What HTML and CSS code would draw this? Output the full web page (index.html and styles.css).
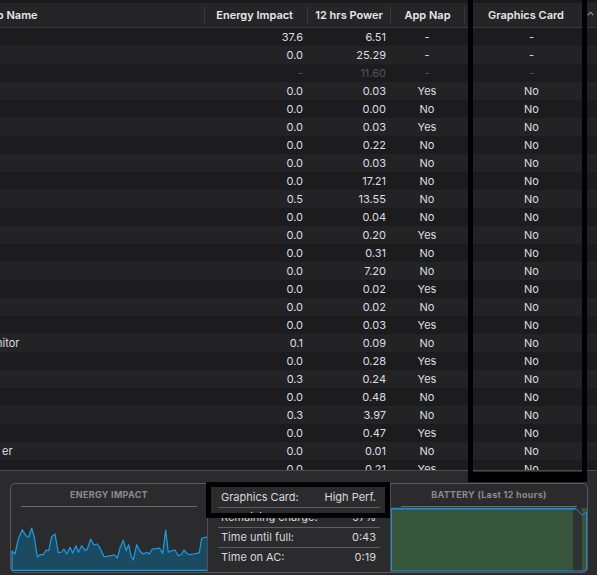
FILE: index.html
```html
<!DOCTYPE html>
<html>
<head>
<meta charset="utf-8">
<link rel="stylesheet" href="styles.css">
</head>
<body>
<div class="window">
  <div class="topstrip"></div>
  <div class="table">
    <div class="thead grid">
      <div class="hc name"><span class="clip-name">App Name</span></div>
      <div class="hc sep num-energy-h">Energy Impact</div>
      <div class="hc sep num-power-h">12 hrs Power</div>
      <div class="hc sep center">App Nap</div>
      <div class="hc sep gpu-h"><span class="gpu-label">Graphics Card</span><svg class="sort" width="7" height="5" viewBox="0 0 7 5"><path d="M0.8 4.2 L3.5 1.2 L6.2 4.2" fill="none" stroke="#9a9a9c" stroke-width="1.1"/></svg></div>
    </div>
    <div class="tbody">
      <div class="row grid"><div></div><div class="e">37.6</div><div class="p">6.51</div><div class="c">-</div><div class="g">-</div></div>
      <div class="row grid"><div></div><div class="e">0.0</div><div class="p">25.29</div><div class="c">-</div><div class="g">-</div></div>
      <div class="row grid dim"><div></div><div class="e">-</div><div class="p">11.60</div><div class="c">-</div><div class="g">-</div></div>
      <div class="row grid"><div></div><div class="e">0.0</div><div class="p">0.03</div><div class="c">Yes</div><div class="g">No</div></div>
      <div class="row grid"><div></div><div class="e">0.0</div><div class="p">0.00</div><div class="c">No</div><div class="g">No</div></div>
      <div class="row grid"><div></div><div class="e">0.0</div><div class="p">0.03</div><div class="c">Yes</div><div class="g">No</div></div>
      <div class="row grid"><div></div><div class="e">0.0</div><div class="p">0.22</div><div class="c">No</div><div class="g">No</div></div>
      <div class="row grid"><div></div><div class="e">0.0</div><div class="p">0.03</div><div class="c">No</div><div class="g">No</div></div>
      <div class="row grid"><div></div><div class="e">0.0</div><div class="p">17.21</div><div class="c">No</div><div class="g">No</div></div>
      <div class="row grid"><div></div><div class="e">0.5</div><div class="p">13.55</div><div class="c">No</div><div class="g">No</div></div>
      <div class="row grid"><div></div><div class="e">0.0</div><div class="p">0.04</div><div class="c">No</div><div class="g">No</div></div>
      <div class="row grid"><div></div><div class="e">0.0</div><div class="p">0.20</div><div class="c">Yes</div><div class="g">No</div></div>
      <div class="row grid"><div></div><div class="e">0.0</div><div class="p">0.31</div><div class="c">No</div><div class="g">No</div></div>
      <div class="row grid"><div></div><div class="e">0.0</div><div class="p">7.20</div><div class="c">No</div><div class="g">No</div></div>
      <div class="row grid"><div></div><div class="e">0.0</div><div class="p">0.02</div><div class="c">Yes</div><div class="g">No</div></div>
      <div class="row grid"><div></div><div class="e">0.0</div><div class="p">0.02</div><div class="c">No</div><div class="g">No</div></div>
      <div class="row grid"><div></div><div class="e">0.0</div><div class="p">0.03</div><div class="c">Yes</div><div class="g">No</div></div>
      <div class="row grid"><div class="n n-monitor">nitor</div><div class="e">0.1</div><div class="p">0.09</div><div class="c">No</div><div class="g">No</div></div>
      <div class="row grid"><div></div><div class="e">0.0</div><div class="p">0.28</div><div class="c">Yes</div><div class="g">No</div></div>
      <div class="row grid"><div></div><div class="e">0.3</div><div class="p">0.24</div><div class="c">Yes</div><div class="g">No</div></div>
      <div class="row grid"><div></div><div class="e">0.0</div><div class="p">0.48</div><div class="c">No</div><div class="g">No</div></div>
      <div class="row grid"><div></div><div class="e">0.3</div><div class="p">3.97</div><div class="c">No</div><div class="g">No</div></div>
      <div class="row grid"><div></div><div class="e">0.0</div><div class="p">0.47</div><div class="c">Yes</div><div class="g">No</div></div>
      <div class="row grid"><div class="n n-er">er</div><div class="e">0.0</div><div class="p">0.01</div><div class="c">No</div><div class="g">No</div></div>
      <div class="row grid"><div></div><div class="e">0.0</div><div class="p">0.21</div><div class="c">Yes</div><div class="g">No</div></div>
    </div>
  </div>
  <div class="footer">
    <div class="panel">
      <section class="energy">
        <div class="ptitle">ENERGY IMPACT</div>
        <svg class="graph" width="196" height="65" viewBox="11 508 196 65">
          <polygon fill="#1c4a60" points="12,552 15,555 18.3,540 22.3,530.7 26,536.7 28.7,538 31.7,529 34.3,538 37.3,558 40,555.7 43.3,555.7 46,551 48.7,551.7 51.7,537.7 55,535 58.3,553.7 61.7,553 64,550 66.7,555 70,548.3 72.7,554.3 76,546.7 78.3,553.3 81.7,546.7 85,551.7 87.3,550 90.7,540 94,546 97.3,545 100,549 104,557.7 107.3,557.3 110.7,556.7 114,555.7 117.3,559 120,549 123.3,541 126,551.7 128.7,545.7 131,556.7 133.3,561 136.7,545.7 140,552.3 143.3,555 146.7,553.3 149.3,555 152.3,550 156,549.7 159.3,549 162.7,554.3 165.7,531 168.3,553.3 171.7,551.7 175,551 178.3,556.7 181.7,555 184,551 186.7,554.3 190,555.7 193.3,555 196.7,554.3 199.3,553.7 201.7,539.3 205,538.3 207,538.3 207,571 12,571"/>
          <polyline fill="none" stroke="#1a9de2" stroke-width="1.2" stroke-linejoin="round" points="12,571 12,552 15,555 18.3,540 22.3,530.7 26,536.7 28.7,538 31.7,529 34.3,538 37.3,558 40,555.7 43.3,555.7 46,551 48.7,551.7 51.7,537.7 55,535 58.3,553.7 61.7,553 64,550 66.7,555 70,548.3 72.7,554.3 76,546.7 78.3,553.3 81.7,546.7 85,551.7 87.3,550 90.7,540 94,546 97.3,545 100,549 104,557.7 107.3,557.3 110.7,556.7 114,555.7 117.3,559 120,549 123.3,541 126,551.7 128.7,545.7 131,556.7 133.3,561 136.7,545.7 140,552.3 143.3,555 146.7,553.3 149.3,555 152.3,550 156,549.7 159.3,549 162.7,554.3 165.7,531 168.3,553.3 171.7,551.7 175,551 178.3,556.7 181.7,555 184,551 186.7,554.3 190,555.7 193.3,555 196.7,554.3 199.3,553.7 201.7,539.3 205,538.3 207,538.3"/>
          <line x1="12" y1="571.4" x2="207" y2="571.4" stroke="#1a9de2" stroke-width="1.2"/>
        </svg>
      </section>
      <section class="info">
        <div class="irow"><span>Graphics Card:</span><span>High Perf.</span></div>
        <div class="irow"><span>Remaining charge:</span><span>97%</span></div>
        <div class="irow"><span>Time until full:</span><span>0:43</span></div>
        <div class="irow"><span>Time on AC:</span><span>0:19</span></div>
      </section>
      <section class="battery">
        <div class="ptitle">BATTERY (Last 12 hours)</div>
        <svg class="graph" width="196" height="65" viewBox="391 508 196 65">
          <rect x="391" y="509" width="182" height="63" fill="#37553a"/>
          <rect x="573" y="509" width="9" height="63" fill="#2f322f"/>
          <rect x="582" y="509" width="5" height="63" fill="#37553a"/>
          <path d="M391.5 509.8 H576 L582 516 L586.5 513 V572 H391.5 Z" fill="none" stroke="#1d8ccb" stroke-width="1"/>
          <line x1="391" y1="509.6" x2="576" y2="509.6" stroke="#1d8ccb" stroke-width="1.8"/>
        </svg>
      </section>
    </div>
  </div>
  <div class="callout callout-col"></div>
  <div class="callout callout-gpu"></div>
</div>
</body>
</html>
```
FILE: styles.css
```css
* { box-sizing: border-box; }
html, body { margin: 0; padding: 0; }
body {
  background: #1d1d1f;
  font-family: Inter, "Noto Sans", "Liberation Sans", sans-serif;
  font-size: 11px;
  color: #dedee0;
}
.window {
  position: relative;
  width: 597px;
  height: 575px;
  overflow: hidden;
  background: #1d1d1f;
}
.topstrip {
  height: 3px;
  background: #1a1a1c;
}
.table {
  height: 468px;
  overflow: hidden;
  border-bottom: 1px solid #4c4c4e;
}
.grid {
  display: grid;
  grid-template-columns: 204px 103px 83px 74px 1fr;
}
.thead {
  height: 25px;
  padding: 4px 0;
  background: #252527;
  border-bottom: 1px solid #38383a;
  font-weight: 600;
  color: #e8e8ea;
}
.hc {
  height: 16px;
  line-height: 16px;
  white-space: nowrap;
  overflow: hidden;
}
.hc.sep { border-left: 1px solid #3a3a3c; }
.hc.name { text-indent: -18px; }
.num-energy-h { text-align: right; padding-right: 14px; }
.num-power-h { text-align: right; padding-right: 7px; }
.center { text-align: center; }
.gpu-h {
  display: flex;
  align-items: center;
}
.gpu-label { flex: 1; text-align: center; }
.sort { flex: none; margin: 0 3px 3px 0; }
.tbody {
  height: 443px;
  overflow: hidden;
}
.row {
  height: 18px;
  line-height: 18px;
  background: #1c1c1e;
  white-space: nowrap;
}
.row:nth-child(even) { background: #232326; }
.row.dim { color: #545457; }
.n { overflow: hidden; }
.n-monitor { text-indent: -4px; }
.n-er { padding-left: 2px; }
.e { text-align: right; padding-right: 4px; }
.p { text-align: right; padding-right: 4px; }
.c { text-align: center; }
.g { text-align: center; padding-left: 2px; }
.footer {
  height: 104px;
  background: #2b2b2d;
  padding: 12px 0 0 10px;
}
.panel {
  display: flex;
  width: 578px;
  height: 90px;
  border: 1px solid #5a5a5c;
  border-radius: 5px;
  overflow: hidden;
}
.energy {
  width: 197px;
  border-right: 1px solid #505052;
}
.info {
  width: 183px;
  border-right: 1px solid #505052;
  padding: 4px 10px 0 10px;
}
.battery { flex: 1; }
.ptitle {
  margin: 0 10px;
  padding-top: 5px;
  height: 23px;
  line-height: 12px;
  border-bottom: 1px solid #6a6a6c;
  text-align: center;
  font-size: 9px;
  font-weight: 700;
  letter-spacing: 0.3px;
  color: #8c8c8f;
}
.graph { display: block; }
.irow {
  display: flex;
  justify-content: space-between;
  height: 20px;
  line-height: 19px;
  padding: 0 4px 0 3px;
  border-bottom: 1px solid #5e5e60;
  color: #d8d8da;
}
.irow:last-child { border-bottom: none; }
.callout {
  position: absolute;
  border: 5px solid #000;
}
.callout-col {
  left: 468px;
  top: -5px;
  width: 119px;
  height: 487px;
  border-bottom-width: 10px;
}
.callout-gpu {
  left: 206px;
  top: 482px;
  width: 184px;
  height: 36px;
}
```
